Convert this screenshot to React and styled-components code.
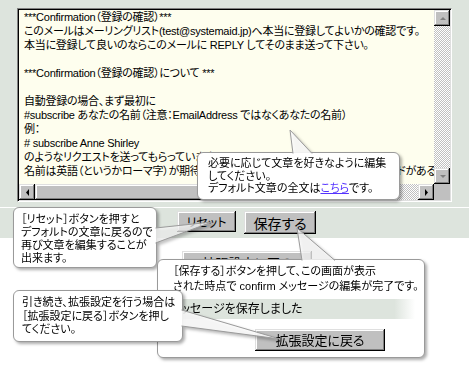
import React from "react";
import styled, { createGlobalStyle } from "styled-components";

const FONT = `"Liberation Sans", "Noto Sans CJK JP", sans-serif`;

const GlobalStyle = createGlobalStyle`
  html, body { margin: 0; padding: 0; background: #fff; }
  body { font-family: ${FONT}; }
`;

const Page = styled.div`
  position: relative;
  width: 469px;
  height: 369px;
  overflow: hidden;
  background: #fff;
  font-family: ${FONT};
  color: #000;
`;

const EditorPanel = styled.div`
  background: #dde4dd;
  padding: 8px 0 5px 17px;
`;

const TextBox = styled.div`
  width: 435px;
  height: 194px;
  box-sizing: border-box;
  border-top: 1px solid #808080;
  border-left: 1px solid #808080;
  border-right: 1px solid #fff;
  border-bottom: 1px solid #fff;
  padding: 1px;
  box-shadow: inset 1px 1px 0 #000, inset -1px -1px 0 #dfdfdf;
  background: #fefeee;
  display: grid;
  grid-template-columns: 1fr 16px;
  grid-template-rows: 1fr 16px;
`;

const TextContent = styled.div`
  overflow: hidden;
  padding: 0 0 0 5px;
  font-size: 11px;
  line-height: 14px;
  letter-spacing: -0.25px;
  white-space: pre;
  font-feature-settings: "palt";
`;

const Line = styled.div`
  height: 14px;
`;

const VScroll = styled.div`
  grid-column: 2;
  grid-row: 1;
  display: flex;
  flex-direction: column;
`;

const HScroll = styled.div`
  grid-column: 1;
  grid-row: 2;
  display: flex;
`;

const Corner = styled.div`
  grid-column: 2;
  grid-row: 2;
  background: #c0c0c0;
`;

const Track = styled.div`
  flex: 1;
  background: repeating-conic-gradient(#c0c0c0 0 25%, #ffffff 0 50%) 0 0 / 2px 2px;
`;

const bevel = `
  background: #c0c0c0;
  box-shadow: inset -1px -1px 0 #000, inset 1px 1px 0 #dfdfdf,
    inset -2px -2px 0 #808080, inset 2px 2px 0 #fff;
`;

const ScrollBtn = styled.div`
  width: 16px;
  height: 16px;
  flex: none;
  display: flex;
  align-items: center;
  justify-content: center;
  ${bevel}
`;

const Thumb = styled.div`
  width: ${(p) => p.$w}px;
  flex: none;
  ${bevel}
`;

const ButtonBand = styled.div`
  height: 27px;
  border-top: 1px solid #fff;
  background: #dde4dd;
  display: flex;
  align-items: flex-start;
  gap: 8px;
  padding: 3px 0 0 177px;
`;

const LowerArea = styled.div`
  padding: 13px 0 0 182px;
`;

const Button = styled.div`
  box-sizing: border-box;
  width: ${(p) => p.$w}px;
  height: ${(p) => p.$h}px;
  font-size: ${(p) => p.$fs}px;
  margin: ${(p) => p.$m || 0};
  display: flex;
  align-items: center;
  justify-content: center;
  font-feature-settings: "palt";
  ${bevel}
`;

const Callout = styled.div`
  position: absolute;
  left: ${(p) => p.$x}px;
  top: ${(p) => p.$y}px;
  width: ${(p) => p.$w}px;
  height: ${(p) => p.$h}px;
  filter: drop-shadow(2px 2px 1.5px rgba(0, 0, 0, 0.32));
`;

const CalloutBody = styled.div`
  box-sizing: border-box;
  width: 100%;
  height: 100%;
  background: #fff;
  border: 1px solid #9a9a9a;
  border-radius: 6px;
  padding: ${(p) => p.$pad};
  font-size: 11px;
  line-height: ${(p) => p.$lh}px;
  white-space: nowrap;
  font-feature-settings: "palt";
  overflow: hidden;
`;

const CalloutText = styled.div`
  padding-left: ${(p) => p.$indent}px;
`;

const TailSvg = styled.svg`
  position: absolute;
  left: 0;
  top: 0;
  overflow: visible;
  pointer-events: none;
`;

const MsgBand = styled.div`
  margin: 5px -1px 0 -1px;
  width: 258px;
  height: 20px;
  padding-left: 13px;
  box-sizing: border-box;
  font-size: 12px;
  line-height: 20px;
  background: linear-gradient(90deg, #dde4dd 0, #dde4dd 92%, rgba(221, 228, 221, 0) 100%);
`;

const Link = styled.span`
  color: #5533ff;
  text-decoration: underline;
`;

function Tail({ pts, opacity = 0.85 }) {
  const s = pts.map((p) => p.join(",")).join(" ");
  return (
    <TailSvg width="1" height="1">
      <polygon points={s} fill="#fff" fillOpacity={opacity} />
      <polyline points={s} fill="none" stroke="#9a9a9a" strokeWidth="1" />
    </TailSvg>
  );
}

function Arrow({ dir, color }) {
  const shapes = {
    up: "2,6 5,3 8,6",
    down: "2,3 5,6 8,3",
    left: "6,1 3,4.5 6,8",
    right: "3,1 6,4.5 3,8",
  };
  return (
    <svg width="9" height="9" viewBox="0 0 9 9">
      <polygon points={shapes[dir]} fill={color} />
    </svg>
  );
}

const lines = [
  "***Confirmation（登録の確認）***",
  "このメールはメーリングリスト(test@systemaid.jp)へ本当に登録してよいかの確認です。",
  "本当に登録して良いのならこのメールに REPLY してそのまま送って下さい。",
  "",
  "***Confirmation（登録の確認）について ***",
  "",
  "自動登録の場合、まず最初に",
  "#subscribe あなたの名前（注意：EmailAddress ではなくあなたの名前）",
  "例：",
  "# subscribe Anne Shirley",
  "のようなリクエストを送ってもらっています。",
  "名前は英語（というかローマ字）が期待されています。また全角スペースなどのコードがあると",
];

export default function App() {
  return (
    <Page>
      <GlobalStyle />
      <EditorPanel>
        <TextBox>
          <TextContent>
            {lines.map((l, i) => (
              <Line key={i}>{l}</Line>
            ))}
          </TextContent>
          <VScroll>
            <ScrollBtn>
              <Arrow dir="up" color="#808080" />
            </ScrollBtn>
            <Track />
            <ScrollBtn>
              <Arrow dir="down" color="#808080" />
            </ScrollBtn>
          </VScroll>
          <HScroll>
            <ScrollBtn>
              <Arrow dir="left" color="#000" />
            </ScrollBtn>
            <Thumb $w={290} />
            <Track />
            <ScrollBtn>
              <Arrow dir="right" color="#000" />
            </ScrollBtn>
          </HScroll>
          <Corner />
        </TextBox>
      </EditorPanel>
      <ButtonBand>
        <Button $w={59} $h={21} $fs={12}>リセット</Button>
        <Button $w={72} $h={23} $fs={14}>保存する</Button>
      </ButtonBand>
      <LowerArea>
        <Button $w={130} $h={22} $fs={13}>拡張設定に戻る</Button>
      </LowerArea>

      <Callout $x={197} $y={152} $w={203} $h={48}>
        <CalloutBody $pad="4px 0 0 10px" $lh={12.5}>
          必要に応じて文章を好きなように編集
          <br />
          してください。
          <br />
          デフォルト文章の全文は<Link>こちら</Link>です。
        </CalloutBody>
        <Tail pts={[[96, 1.5], [93, -22], [115, 1.5]]} />
      </Callout>

      <Callout $x={13} $y={207} $w={144} $h={61}>
        <CalloutBody $pad="5px 0 0 7px" $lh={13}>
          ［リセット］ボタンを押すと
          <br />
          デフォルトの文章に戻るので
          <br />
          再び文章を編集することが
          <br />
          出来ます。
        </CalloutBody>
        <Tail pts={[[142.5, 21], [199, 15], [142.5, 36]]} opacity={0.7} />
      </Callout>

      <Callout $x={157} $y={259} $w={268} $h={99}>
        <CalloutBody $pad="4px 0 0 0" $lh={15}>
          <CalloutText $indent={15}>
            ［保存する］ボタンを押して、この画面が表示
            <br />
            された時点で confirm メッセージの編集が完了です。
          </CalloutText>
          <MsgBand>メッセージを保存しました</MsgBand>
          <Button $w={130} $h={22} $fs={13} $m="10px 0 0 97px">拡張設定に戻る</Button>
        </CalloutBody>
        <Tail pts={[[145, 1.5], [140, -31], [178, 1.5]]} opacity={0.75} />
      </Callout>

      <Callout $x={13} $y={290} $w={170} $h={52}>
        <CalloutBody $pad="5px 0 0 8px" $lh={13.5}>
          引き続き、拡張設定を行う場合は
          <br />
          ［拡張設定に戻る］ボタンを押し
          <br />
          てください。
        </CalloutBody>
        <Tail pts={[[168.5, 20], [267, 49], [168.5, 36]]} />
      </Callout>
    </Page>
  );
}
